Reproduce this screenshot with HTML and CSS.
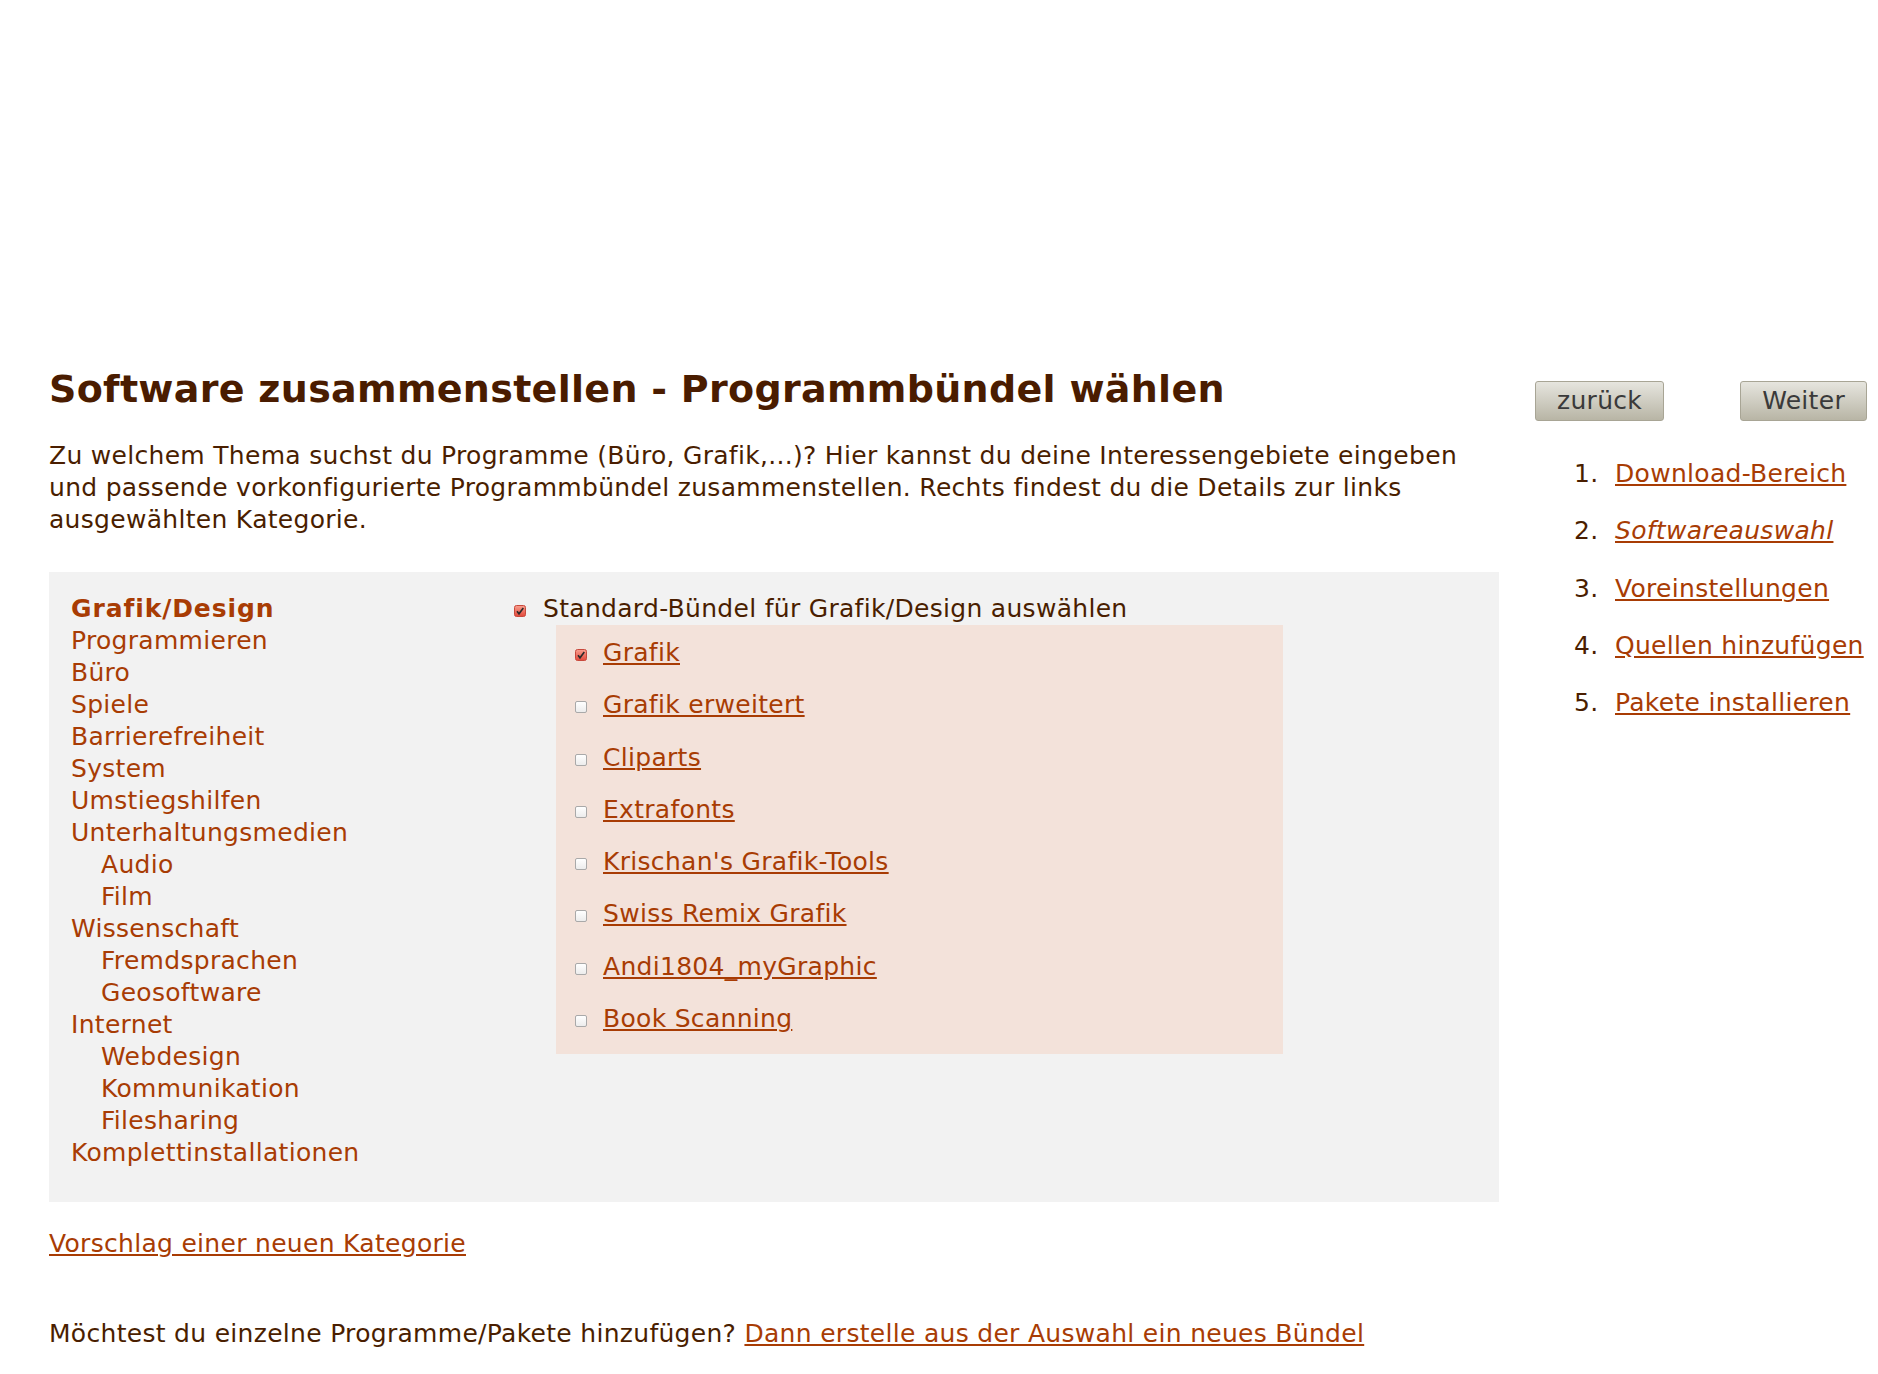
FILE: index.html
```html
<!DOCTYPE html>
<html lang="de">
<head>
<meta charset="utf-8">
<title>Software zusammenstellen - Programmbündel wählen</title>
<link rel="stylesheet" href="styles.css">
</head>
<body>
<div class="page">
  <div class="main">
    <h1 class="title">Software zusammenstellen - Programmbündel wählen</h1>
    <p class="intro">Zu welchem Thema suchst du Programme (Büro, Grafik,...)? Hier kannst du deine Interessengebiete eingeben und passende vorkonfigurierte Programmbündel zusammenstellen. Rechts findest du die Details zur links ausgewählten Kategorie.</p>
    <div class="panel">
      <ul class="cats">
        <li><a class="cat active" href="#">Grafik/Design</a></li>
        <li><a class="cat" href="#">Programmieren</a></li>
        <li><a class="cat" href="#">Büro</a></li>
        <li><a class="cat" href="#">Spiele</a></li>
        <li><a class="cat" href="#">Barrierefreiheit</a></li>
        <li><a class="cat" href="#">System</a></li>
        <li><a class="cat" href="#">Umstiegshilfen</a></li>
        <li><a class="cat" href="#">Unterhaltungsmedien</a></li>
        <li class="sub"><a class="cat" href="#">Audio</a></li>
        <li class="sub"><a class="cat" href="#">Film</a></li>
        <li><a class="cat" href="#">Wissenschaft</a></li>
        <li class="sub"><a class="cat" href="#">Fremdsprachen</a></li>
        <li class="sub"><a class="cat" href="#">Geosoftware</a></li>
        <li><a class="cat" href="#">Internet</a></li>
        <li class="sub"><a class="cat" href="#">Webdesign</a></li>
        <li class="sub"><a class="cat" href="#">Kommunikation</a></li>
        <li class="sub"><a class="cat" href="#">Filesharing</a></li>
        <li><a class="cat" href="#">Komplettinstallationen</a></li>
      </ul>
      <div class="details">
        <div class="std"><span class="cb checked"><svg viewBox="0 0 12 12" width="12" height="12"><defs><linearGradient id="rg" x1="0" y1="0" x2="0" y2="1"><stop offset="0" stop-color="#f9a090"/><stop offset="1" stop-color="#e2483a"/></linearGradient></defs><rect x="0.5" y="0.5" width="11" height="11" rx="2" fill="url(#rg)" stroke="#c8493c"/><path d="M3 6.2 L5 8.8 L9.3 3" fill="none" stroke="#2a2a2a" stroke-width="1.6"/></svg></span><span class="std-label">Standard-Bündel für Grafik/Design auswählen</span></div>
        <ul class="bundles">
          <li><span class="cb checked"><svg viewBox="0 0 12 12" width="12" height="12"><rect x="0.5" y="0.5" width="11" height="11" rx="2" fill="url(#rg)" stroke="#c8493c"/><path d="M3 6.2 L5 8.8 L9.3 3" fill="none" stroke="#2a2a2a" stroke-width="1.6"/></svg></span><a href="#">Grafik</a></li>
          <li><span class="cb"></span><a href="#">Grafik erweitert</a></li>
          <li><span class="cb"></span><a href="#">Cliparts</a></li>
          <li><span class="cb"></span><a href="#">Extrafonts</a></li>
          <li><span class="cb"></span><a href="#">Krischan's Grafik-Tools</a></li>
          <li><span class="cb"></span><a href="#">Swiss Remix Grafik</a></li>
          <li><span class="cb"></span><a href="#">Andi1804_myGraphic</a></li>
          <li><span class="cb"></span><a href="#">Book Scanning</a></li>
        </ul>
      </div>
    </div>
    <p class="suggest"><a href="#">Vorschlag einer neuen Kategorie</a></p>
    <p class="more">Möchtest du einzelne Programme/Pakete hinzufügen? <a href="#">Dann erstelle aus der Auswahl ein neues Bündel</a></p>
  </div>
  <div class="side">
    <div class="buttons">
      <button class="btn" type="button">zurück</button>
      <button class="btn" type="button">Weiter</button>
    </div>
    <ol class="steps">
      <li><a href="#">Download-Bereich</a></li>
      <li><a class="current" href="#">Softwareauswahl</a></li>
      <li><a href="#">Voreinstellungen</a></li>
      <li><a href="#">Quellen hinzufügen</a></li>
      <li><a href="#">Pakete installieren</a></li>
    </ol>
  </div>
</div>
</body>
</html>
```

FILE: styles.css
```css
html, body {
  margin: 0;
  padding: 0;
  background: #ffffff;
}
body {
  font-family: "DejaVu Sans", Verdana, sans-serif;
  font-size: 25px;
  line-height: 32px;
  letter-spacing: 0.3px;
  color: #4a1e00;
}
a {
  color: #a83c04;
}
.page {
  display: flex;
  align-items: flex-start;
}
.main {
  margin-left: 49px;
  width: 1450px;
  padding-top: 366px;
}
.title {
  margin: 0;
  font-size: 38px;
  line-height: 46px;
  font-weight: bold;
  letter-spacing: 0.3px;
  color: #4a1c00;
}
.intro {
  margin: 28px 0 0 0;
}
.panel {
  margin-top: 36px;
  background: #f2f2f2;
  height: 630px;
  box-sizing: border-box;
  padding: 21px 0 0 22px;
  display: grid;
  grid-template-columns: 443px 1fr;
}
.cats {
  list-style: none;
  margin: 0;
  padding: 0;
}
.cats .sub {
  padding-left: 30px;
}
.cat {
  text-decoration: none;
}
.cat.active {
  font-weight: bold;
  letter-spacing: 0.9px;
}
.std {
  display: flex;
  align-items: baseline;
}
.cb {
  display: inline-block;
  width: 12px;
  height: 12px;
  box-sizing: border-box;
  border: 1px solid #a9a9a9;
  border-radius: 2px;
  background: linear-gradient(#ffffff, #ececec);
  vertical-align: baseline;
  flex: none;
}
.cb.checked {
  border: none;
  background: none;
}
.cb svg {
  display: block;
}
.std .cb {
  margin-right: 17px;
}
.bundles {
  list-style: none;
  margin: 0 0 0 42px;
  padding: 2px 0 9px 19px;
  width: 727px;
  box-sizing: border-box;
  background: #f3e2da;
}
.bundles li {
  line-height: 52.3px;
}
.bundles .cb {
  margin-right: 16px;
}
.suggest {
  margin: 26px 0 0 0;
}
.more {
  margin: 58px 0 0 0;
}
.side {
  margin-left: 36px;
  padding-top: 381px;
}
.buttons {
  display: flex;
  gap: 76px;
}
.btn {
  height: 40px;
  padding: 0 21px;
  font-family: "DejaVu Sans", Verdana, sans-serif;
  font-size: 25px;
  letter-spacing: 0.3px;
  color: #3a3a3a;
  background: linear-gradient(#e6e5de, #b8b5a5);
  border: 1px solid #a8a595;
  border-radius: 3px;
  line-height: 36px;
}
.steps {
  list-style: none;
  margin: 37px 0 0 0;
  padding: 0 0 0 39px;
  counter-reset: step;
}
.steps li {
  counter-increment: step;
  margin-bottom: 25.3px;
  white-space: nowrap;
}
.steps li::before {
  content: counter(step) ".";
  display: inline-block;
  width: 41px;
  color: #4a1e00;
}
.steps .current {
  font-style: italic;
}
```
